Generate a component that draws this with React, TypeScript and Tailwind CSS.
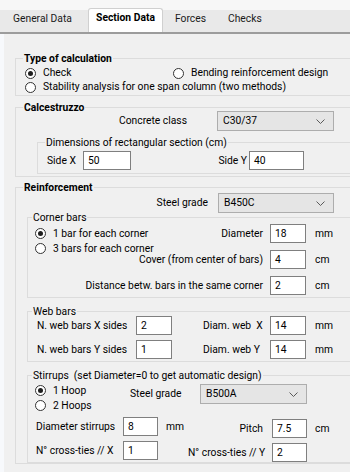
import React from "react";

function Radio({ checked, label }: { checked?: boolean; label: string }) {
  return (
    <div className="flex h-[15px] items-center whitespace-nowrap">
      <span className="flex h-[11px] w-[11px] shrink-0 items-center justify-center rounded-full border border-[#333333] bg-white">
        {checked && <span className="h-[5px] w-[5px] rounded-full bg-[#1f1f1f]" />}
      </span>
      <span className="ml-[7px]">{label}</span>
    </div>
  );
}

function Chevron() {
  return (
    <svg width="9" height="5" viewBox="0 0 9 5" fill="none">
      <path d="M0.5 0.5 L4.5 4.5 L8.5 0.5" stroke="#5a5a5a" strokeWidth="1" />
    </svg>
  );
}

function Select({ value, className }: { value: string; className: string }) {
  return (
    <div
      className={
        "flex h-[20px] shrink-0 items-center justify-between border border-[#adadad] bg-[#e5e5e5] pl-[5px] pr-[8px] " +
        className
      }
    >
      <span>{value}</span>
      <Chevron />
    </div>
  );
}

function Box({ value, className }: { value: string; className: string }) {
  return (
    <div
      className={
        "h-[19px] shrink-0 border border-[#7f7f7f] bg-white pl-[4px] leading-[17px] " + className
      }
    >
      {value}
    </div>
  );
}

export default function App() {
  return (
    <div className="h-[472px] w-[350px] overflow-hidden bg-[#f7f9fc] font-[Roboto,sans-serif] text-[10.3px] leading-[14px] text-black">
      {/* tab strip */}
      <div className="h-[34px] border-b-2 border-[#9c9c9c] bg-[#f7f7f7] pt-[10px]">
        <div className="flex h-[22px] items-end bg-[#e9e9e9] pl-[4px]">
          <div className="flex h-[22px] w-[84px] items-center pb-[5px] pl-[9px] text-[#1a1a1a]">
            General Data
          </div>
          <div className="flex h-[24px] w-[75px] items-center justify-center rounded-t-[3px] border-x border-t border-[#d0d0d0] bg-white pb-[5px] font-bold">
            Section Data
          </div>
          <div className="flex h-[22px] w-[53px] items-center pb-[5px] pl-[12px] text-[#1a1a1a]">
            Forces
          </div>
          <div className="flex h-[22px] w-[60px] items-center pb-[5px] pl-[12px] text-[#1a1a1a]">
            Checks
          </div>
        </div>
      </div>

      {/* panel */}
      <div className="ml-[4px] h-[438px] bg-[#f0f0f0] pl-[11px] pt-[17px]">
        {/* Type of calculation */}
        <fieldset className="w-[345px] border border-[#dcdcdc] pb-[1px]">
          <legend className="ml-[7px] px-[1px] font-bold leading-[15px]">Type of calculation</legend>
          <div className="flex h-[14px] items-center pl-[9px]">
            <div className="w-[148px]">
              <Radio checked label="Check" />
            </div>
            <Radio label="Bending reinforcement design" />
          </div>
          <div className="flex h-[14px] items-center pl-[9px]">
            <Radio label="Stability analysis for one span column (two methods)" />
          </div>
        </fieldset>

        {/* Calcestruzzo */}
        <fieldset className="mt-[4px] w-[345px] border border-[#dcdcdc] pb-[2px]">
          <legend className="ml-[7px] px-[1px] font-bold leading-[15px]">Calcestruzzo</legend>
          <div className="-mt-[4px] flex items-center">
            <div className="w-[171px] text-right">Concrete class</div>
            <Select value="C30/37" className="ml-[30px] w-[117px]" />
          </div>
          <fieldset className="ml-[21px] mt-[4px] w-[320px] border border-[#dcdcdc] pb-[3px]">
            <legend className="ml-[7px] px-[1px] leading-[15px]">Dimensions of rectangular section (cm)</legend>
            <div className="mt-[1px] flex items-center">
              <div className="w-[45px] pl-[9px]">Side X</div>
              <Box value="50" className="w-[48px]" />
              <div className="w-[118px] pr-[2px] text-right">Side Y</div>
              <Box value="40" className="w-[55px]" />
            </div>
          </fieldset>
        </fieldset>

        {/* Reinforcement */}
        <fieldset className="mt-[3px] w-[345px] border border-[#dcdcdc]">
          <legend className="ml-[7px] px-[1px] font-bold leading-[15px]">Reinforcement</legend>
          <div className="-mt-[2px] flex items-center">
            <div className="w-[192px] text-right">Steel grade</div>
            <Select value="B450C" className="ml-[10px] w-[116px]" />
          </div>

          {/* Corner bars */}
          <fieldset className="-mt-[3px] ml-[11px] w-[330px] border border-[#dcdcdc] pb-[2px]">
            <legend className="ml-[4px] px-[1px] leading-[15px]">Corner bars</legend>
            <div className="-mt-[1px] flex h-[19px] items-center">
              <div className="w-[150px] pl-[7px]">
                <Radio checked label="1 bar for each corner" />
              </div>
              <div className="w-[85px] text-right">Diameter</div>
              <Box value="18" className="ml-[7px] w-[36px]" />
              <span className="ml-[9px]">mm</span>
            </div>
            <div className="-mt-[2px] pl-[7px]">
              <Radio label="3 bars for each corner" />
            </div>
            <div className="-mt-[6px] flex h-[19px] items-center">
              <div className="w-[235px] text-right">Cover (from center of bars)</div>
              <Box value="4" className="ml-[7px] w-[36px]" />
              <span className="ml-[9px]">cm</span>
            </div>
            <div className="mt-[7px] flex h-[19px] items-center">
              <div className="w-[235px] text-right">Distance betw. bars in the same corner</div>
              <Box value="2" className="ml-[7px] w-[36px]" />
              <span className="ml-[9px]">cm</span>
            </div>
          </fieldset>

          {/* Web bars */}
          <fieldset className="ml-[11px] mt-[6px] w-[330px] border border-[#dcdcdc] pb-[2px]">
            <legend className="ml-[4px] px-[1px] leading-[15px]">Web bars</legend>
            <div className="-mt-[3px] flex h-[19px] items-center">
              <div className="w-[108px] pl-[9px]">N. web bars X sides</div>
              <Box value="2" className="w-[36px]" />
              <div className="ml-[31px] w-[67px]">Diam. web&nbsp; X</div>
              <Box value="14" className="w-[36px]" />
              <span className="ml-[9px]">mm</span>
            </div>
            <div className="mt-[5px] flex h-[19px] items-center">
              <div className="w-[108px] pl-[9px]">N. web bars Y sides</div>
              <Box value="1" className="w-[36px]" />
              <div className="ml-[31px] w-[67px]">Diam. web Y</div>
              <Box value="14" className="w-[36px]" />
              <span className="ml-[9px]">mm</span>
            </div>
          </fieldset>

          {/* Stirrups */}
          <fieldset className="ml-[11px] mt-[6px] w-[330px] border border-[#dcdcdc]">
            <legend className="ml-[4px] px-[1px] leading-[15px] whitespace-pre">
              Stirrups  (set Diameter=0 to get automatic design)
            </legend>
            <div className="flex items-start">
              <div className="w-[102px] pl-[7px]">
                <Radio checked label="1 Hoop" />
                <Radio label="2 Hoops" />
              </div>
              <div className="mt-[1px] flex items-center">
                <div className="w-[70px]">Steel grade</div>
                <Select value="B500A" className="w-[107px]" />
              </div>
            </div>
            <div className="mt-[4px] flex items-start">
              <div className="flex w-[160px] items-center">
                <div className="w-[95px] pl-[8px]">Diameter stirrups</div>
                <Box value="8" className="w-[35px]" />
                <span className="ml-[8px]">mm</span>
              </div>
              <div className="mt-[2px] flex items-center">
                <div className="w-[75px] text-right">Pitch</div>
                <Box value="7.5" className="ml-[9px] w-[35px]" />
                <span className="ml-[8px]">cm</span>
              </div>
            </div>
            <div className="mt-[3px] flex items-start">
              <div className="flex w-[160px] items-center">
                <div className="w-[95px] pl-[8px]">N° cross-ties // X</div>
                <Box value="1" className="w-[35px]" />
              </div>
              <div className="mt-[2px] flex items-center">
                <div className="w-[75px] whitespace-nowrap text-right">N° cross-ties // Y</div>
                <Box value="2" className="ml-[9px] w-[35px]" />
              </div>
            </div>
          </fieldset>
        </fieldset>
      </div>
    </div>
  );
}
